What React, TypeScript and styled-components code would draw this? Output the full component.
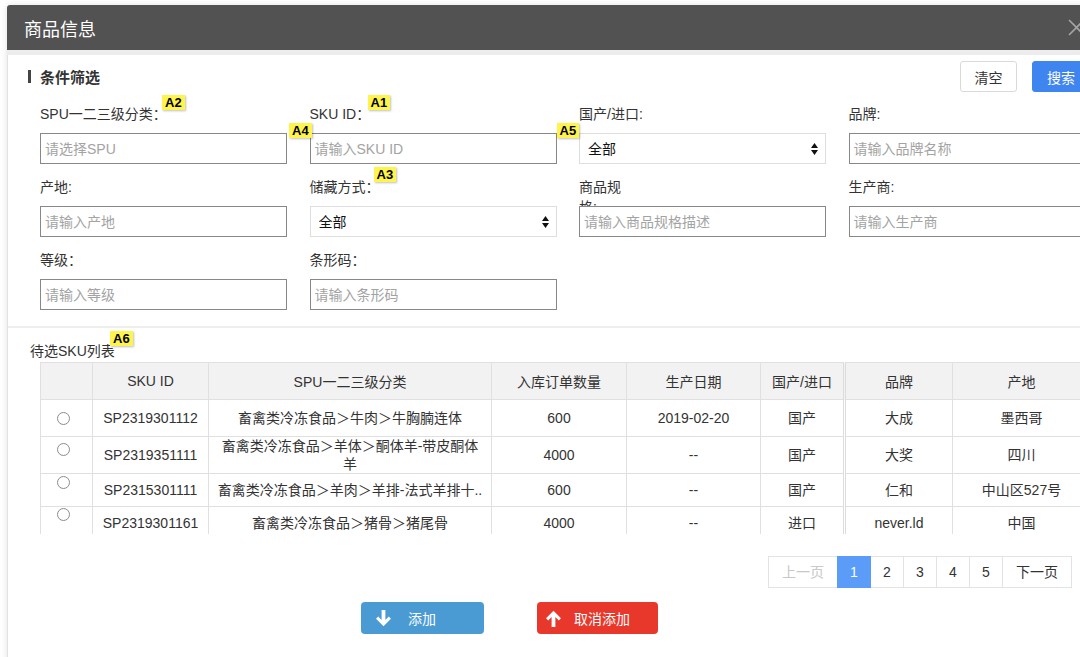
import React from 'react'
import styled, { createGlobalStyle } from 'styled-components'

const GlobalStyle = createGlobalStyle`
  html, body { margin: 0; padding: 0; background: #fff; overflow: hidden; }
  body { font-family: "Liberation Sans", "Noto Sans CJK SC", sans-serif; color: #333; }
  * { box-sizing: border-box; }
`

const FONT = `"Liberation Sans", "Noto Sans CJK SC", sans-serif`

const Dialog = styled.div`
  width: 1098px;
  margin: 5px 0 0 7px;
  background: #fff;
  box-shadow: 0 0 6px rgba(0, 0, 0, 0.12);
`

const Header = styled.div`
  height: 50px;
  background: #525252;
  border-bottom: 5px solid #ededed;
  border-radius: 3px 3px 0 0;
  display: flex;
  align-items: center;
  justify-content: space-between;
  padding: 0 20px 0 17px;
  color: #fff;
  font-size: 18px;
`

const Panel = styled.div`
  border-left: 1px solid #e2e2e2;
  min-height: 610px;
`

const FilterSection = styled.div`
  padding: 6px 15px 16px 20px;
  border-bottom: 2px solid #eee;
`

const TitleRow = styled.div`
  height: 31px;
  display: flex;
  align-items: center;
  justify-content: space-between;
`

const SectionTitle = styled.div`
  display: flex;
  align-items: center;
  gap: 9px;
  font-size: 15px;
  font-weight: bold;
  color: #333;
  &::before {
    content: '';
    width: 3px;
    height: 13px;
    background: #444;
  }
`

const ButtonGroup = styled.div`
  display: flex;
  gap: 15px;
`

const TopButton = styled.button<{ $primary?: boolean }>`
  height: 31px;
  width: ${(p) => (p.$primary ? 58 : 57)}px;
  border-radius: 3px;
  font-family: ${FONT};
  font-size: 14px;
  border: 1px solid ${(p) => (p.$primary ? '#3f85f0' : '#dadada')};
  background: ${(p) => (p.$primary ? '#3f85f0' : '#fff')};
  color: ${(p) => (p.$primary ? '#fff' : '#333')};
  padding: 0;
`

const FormGrid = styled.div`
  margin: 12px 0 0 12px;
  display: grid;
  grid-template-columns: repeat(4, 247px);
  column-gap: 22.5px;
  row-gap: 13px;
`

const Field = styled.div`
  position: relative;
`

const Label = styled.div<{ $narrow?: boolean }>`
  height: 20px;
  line-height: 20px;
  font-size: 14px;
  color: #333;
  margin-bottom: 9px;
  width: ${(p) => (p.$narrow ? '50px' : 'auto')};
`

const TextInput = styled.input`
  position: relative;
  display: block;
  width: 100%;
  height: 31px;
  border: 1px solid #888;
  background: #fff;
  padding: 0 4px;
  font-family: ${FONT};
  font-size: 14px;
  color: #333;
  outline: none;
  &::placeholder { color: #a3a3a3; }
`

const SelectWrap = styled.div`
  position: relative;
  height: 31px;
`

const Select = styled.select`
  appearance: none;
  display: block;
  width: 100%;
  height: 31px;
  border: 1px solid #dedede;
  background: #fff;
  padding: 0 8px;
  font-family: ${FONT};
  font-size: 14px;
  color: #111;
  outline: none;
`

const SelectArrows = styled.svg`
  position: absolute;
  right: 8px;
  top: 10px;
  pointer-events: none;
`

const Badge = styled.span<{ $left: number; $top: number }>`
  position: absolute;
  z-index: 3;
  left: ${(p) => p.$left}px;
  top: ${(p) => p.$top}px;
  background: #fff34d;
  color: #000;
  font-family: "Liberation Sans", sans-serif;
  font-weight: bold;
  font-size: 13px;
  line-height: 15px;
  padding: 0 3px;
  box-shadow: 1px 1px 2px rgba(0, 0, 0, 0.25);
`

const ListSection = styled.div`
  padding: 13px 15px 0 22px;
`

const ListTitle = styled.div`
  position: relative;
  height: 20px;
  line-height: 20px;
  font-size: 14px;
  color: #333;
`

const TableWrap = styled.div`
  margin: 1px 0 0 10px;
  height: 172px;
  overflow: hidden;
`

const Table = styled.table`
  width: 1050px;
  table-layout: fixed;
  border-collapse: collapse;
  font-size: 14px;
  color: #333;
`

const Th = styled.th<{ $split?: boolean }>`
  height: 37px;
  background: #f2f2f2;
  border: 1px solid #e0e0e0;
  ${(p) => (p.$split ? 'border-left: 3px double #dcdcdc;' : '')}
  font-weight: normal;
  text-align: center;
  padding: 0 4px;
`

const Tr = styled.tr<{ $h: number }>`
  height: ${(p) => p.$h}px;
`

const Td = styled.td<{ $split?: boolean }>`
  border: 1px solid #e0e0e0;
  ${(p) => (p.$split ? 'border-left: 3px double #dcdcdc;' : '')}
  text-align: center;
  vertical-align: middle;
  padding: 0 4px;
  line-height: 18px;
  white-space: pre-line;
`

const RadioCell = styled.td<{ $top: number }>`
  border: 1px solid #e0e0e0;
  vertical-align: top;
  padding: ${(p) => p.$top}px 0 0 16px;
`

const Radio = styled.span`
  display: block;
  width: 13px;
  height: 13px;
  border: 1px solid #8c8c8c;
  border-radius: 50%;
  background: #fff;
`

const Pagination = styled.div`
  margin-top: 22px;
  padding-right: 18px;
  display: flex;
  justify-content: flex-end;
`

const PageItem = styled.span<{ $active?: boolean; $disabled?: boolean; $wide?: boolean }>`
  height: 32px;
  line-height: 30px;
  min-width: ${(p) => (p.$wide ? 70 : 34)}px;
  text-align: center;
  margin-left: -1px;
  border: 1px solid ${(p) => (p.$active ? '#5a9cf8' : '#e3e3e3')};
  background: ${(p) => (p.$active ? '#5a9cf8' : '#fff')};
  color: ${(p) => (p.$active ? '#fff' : p.$disabled ? '#c8c8c8' : '#333')};
  font-size: 14px;
  position: relative;
  z-index: ${(p) => (p.$active ? 1 : 0)};
`

const Actions = styled.div`
  margin-top: 14px;
  padding-left: 331px;
  display: flex;
  gap: 53px;
`

const ActionButton = styled.button<{ $danger?: boolean }>`
  height: 32px;
  width: ${(p) => (p.$danger ? 121 : 123)}px;
  border: none;
  border-radius: 4px;
  background: ${(p) => (p.$danger ? '#e8382b' : '#4a9ad4')};
  color: #fff;
  font-family: ${FONT};
  font-size: 14px;
  display: flex;
  align-items: center;
  gap: ${(p) => (p.$danger ? 12 : 16)}px;
  padding: 0 0 0 ${(p) => (p.$danger ? 8 : 14)}px;
`

const ArrowIcon = ({ up }: { up?: boolean }) => (
  <svg width="17" height="17" viewBox="0 0 16 18" style={up ? { transform: 'rotate(180deg)' } : undefined}>
    <path d="M6 0h4v10.5l3.6-3.6 2.3 2.3L8 17.1 0.1 9.2l2.3-2.3L6 10.5z" fill="#fff" />
  </svg>
)

const CloseIcon = () => (
  <svg width="17" height="17" viewBox="0 0 17 17">
    <path d="M1 1L16 16M16 1L1 16" stroke="#a5a5a5" strokeWidth="1.6" />
  </svg>
)

type FieldDef = {
  label: string
  placeholder?: string
  select?: boolean
  narrow?: boolean
  badges?: { text: string; left: number; top: number }[]
}

const FIELDS: FieldDef[] = [
  { label: 'SPU一二三级分类：', placeholder: '请选择SPU', badges: [{ text: 'A2', left: 122, top: -9 }, { text: 'A4', left: 249, top: 19 }] },
  { label: 'SKU ID：', placeholder: '请输入SKU ID', badges: [{ text: 'A1', left: 58, top: -9 }, { text: 'A5', left: 247, top: 19 }] },
  { label: '国产/进口:', select: true },
  { label: '品牌:', placeholder: '请输入品牌名称' },
  { label: '产地:', placeholder: '请输入产地' },
  { label: '储藏方式：', select: true, badges: [{ text: 'A3', left: 64, top: -10 }] },
  { label: '商品规格:', placeholder: '请输入商品规格描述', narrow: true },
  { label: '生产商:', placeholder: '请输入生产商' },
  { label: '等级：', placeholder: '请输入等级' },
  { label: '条形码：', placeholder: '请输入条形码' },
]

const COLUMNS = [
  { title: '', width: 52 },
  { title: 'SKU ID', width: 116 },
  { title: 'SPU一二三级分类', width: 283 },
  { title: '入库订单数量', width: 135 },
  { title: '生产日期', width: 134 },
  { title: '国产/进口', width: 84 },
  { title: '品牌', width: 108 },
  { title: '产地', width: 138 },
]

const ROWS = [
  { h: 37, radioTop: 12, id: 'SP2319301112', spu: '畜禽类冷冻食品＞牛肉＞牛胸腩连体', qty: '600', date: '2019-02-20', origin: '国产', brand: '大成', place: '墨西哥' },
  { h: 36, radioTop: 6, id: 'SP2319351111', spu: '畜禽类冷冻食品＞羊体＞酮体羊-带皮酮体\n羊', qty: '4000', date: '--', origin: '国产', brand: '大奖', place: '四川' },
  { h: 33, radioTop: 2, id: 'SP2315301111', spu: '畜禽类冷冻食品＞羊肉＞羊排-法式羊排十..', qty: '600', date: '--', origin: '国产', brand: '仁和', place: '中山区527号' },
  { h: 33, radioTop: 1, id: 'SP2319301161', spu: '畜禽类冷冻食品＞猪骨＞猪尾骨', qty: '4000', date: '--', origin: '进口', brand: 'never.ld', place: '中国' },
]

export default function App() {
  return (
    <>
      <GlobalStyle />
      <Dialog>
        <Header>
          <span>商品信息</span>
          <CloseIcon />
        </Header>
        <Panel>
          <FilterSection>
            <TitleRow>
              <SectionTitle>条件筛选</SectionTitle>
              <ButtonGroup>
                <TopButton>清空</TopButton>
                <TopButton $primary>搜索</TopButton>
              </ButtonGroup>
            </TitleRow>
            <FormGrid>
              {FIELDS.map((f) => (
                <Field key={f.label}>
                  <Label $narrow={f.narrow}>{f.label}</Label>
                  {f.select ? (
                    <SelectWrap>
                      <Select defaultValue="all">
                        <option value="all">全部</option>
                      </Select>
                      <SelectArrows width="7" height="12" viewBox="0 0 7 12">
                        <path d="M3.5 0L7 5H0z M3.5 12L0 7h7z" fill="#111" />
                      </SelectArrows>
                    </SelectWrap>
                  ) : (
                    <TextInput placeholder={f.placeholder} />
                  )}
                  {f.badges?.map((b) => (
                    <Badge key={b.text} $left={b.left} $top={b.top}>{b.text}</Badge>
                  ))}
                </Field>
              ))}
            </FormGrid>
          </FilterSection>

          <ListSection>
            <ListTitle>
              待选SKU列表
              <Badge $left={80} $top={-10}>A6</Badge>
            </ListTitle>
            <TableWrap>
              <Table>
                <colgroup>
                  {COLUMNS.map((c, i) => (
                    <col key={i} style={{ width: c.width }} />
                  ))}
                </colgroup>
                <thead>
                  <tr>
                    {COLUMNS.map((c, i) => (
                      <Th key={i} $split={i === 6}>{c.title}</Th>
                    ))}
                  </tr>
                </thead>
                <tbody>
                  {ROWS.map((r) => (
                    <Tr key={r.id} $h={r.h}>
                      <RadioCell $top={r.radioTop}><Radio /></RadioCell>
                      <Td>{r.id}</Td>
                      <Td>{r.spu}</Td>
                      <Td>{r.qty}</Td>
                      <Td>{r.date}</Td>
                      <Td>{r.origin}</Td>
                      <Td $split>{r.brand}</Td>
                      <Td>{r.place}</Td>
                    </Tr>
                  ))}
                </tbody>
              </Table>
            </TableWrap>

            <Pagination>
              <PageItem $disabled $wide>上一页</PageItem>
              <PageItem $active>1</PageItem>
              <PageItem>2</PageItem>
              <PageItem>3</PageItem>
              <PageItem>4</PageItem>
              <PageItem>5</PageItem>
              <PageItem $wide>下一页</PageItem>
            </Pagination>

            <Actions>
              <ActionButton>
                <ArrowIcon />
                添加
              </ActionButton>
              <ActionButton $danger>
                <ArrowIcon up />
                取消添加
              </ActionButton>
            </Actions>
          </ListSection>
        </Panel>
      </Dialog>
    </>
  )
}
